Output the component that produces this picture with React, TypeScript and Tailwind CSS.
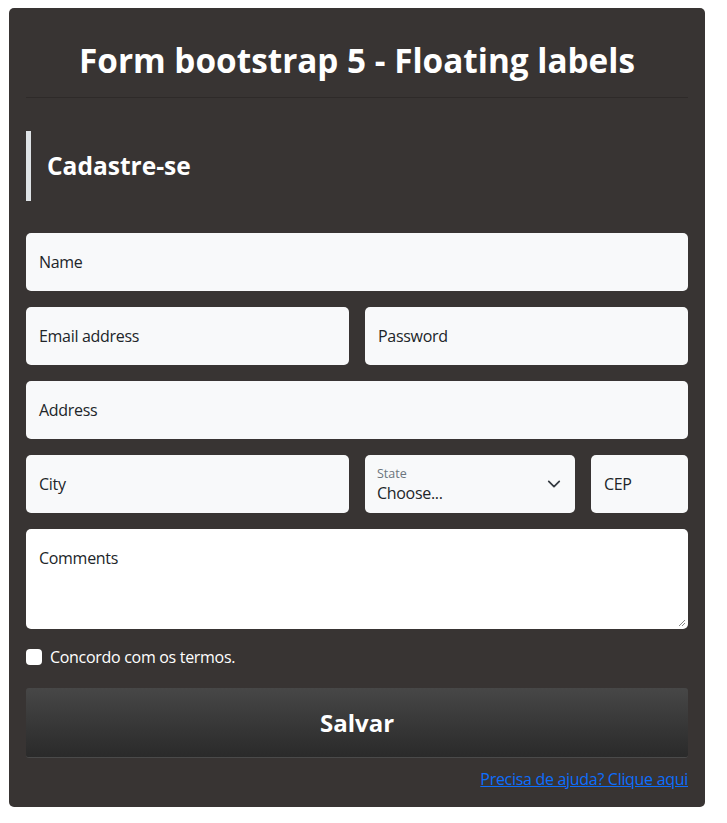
import React from 'react';

const font = { fontFamily: '"Open Sans", "Noto Sans", sans-serif' };

const Field: React.FC<{ label: string; className?: string }> = ({ label, className }) => (
  <div className={`h-[58px] rounded-[5px] bg-[#f8f9fa] flex items-center px-[13px] text-[16px] tracking-[-0.3px] text-[#212529] ${className || ''}`}>
    {label}
  </div>
);

const App: React.FC = () => {
  return (
    <div className="min-h-screen bg-white pt-[8px] px-[9px]" style={font}>
      <div className="w-[696px] h-[799px] bg-[#383433] rounded-[5px] px-[17px]">
        {/* Header */}
        <div className="h-[90px] border-b border-[#2e2a29] flex items-center justify-center">
          <h1 className="text-[33.3px] font-bold text-white mt-[25px] mb-[8px]">Form bootstrap 5 - Floating labels</h1>
        </div>

        {/* Section title */}
        <div className="mt-[33px] h-[70px] border-l-[5px] border-[#dee2e6] flex items-center pl-[16px]">
          <h2 className="text-[24.5px] font-bold text-white">Cadastre-se</h2>
        </div>

        <div className="mt-[32px] grid grid-cols-12 gap-[16px]">
          <Field label="Name" className="col-span-12" />
          <Field label="Email address" className="col-span-6" />
          <Field label="Password" className="col-span-6" />
          <Field label="Address" className="col-span-12" />
          <Field label="City" className="col-span-6" />
          <div className="col-span-4 h-[58px] rounded-[5px] bg-[#f8f9fa] flex items-center justify-between pl-[12px] pr-[14px]">
            <div className="flex flex-col pt-[1px]">
              <span className="text-[12.5px] leading-[16px] text-[#6c757d]">State</span>
              <span className="text-[16px] leading-[22px] tracking-[-0.3px] text-[#212529]">Choose...</span>
            </div>
            <svg width="14" height="14" viewBox="0 0 16 16" fill="none" stroke="#343a40" strokeWidth="2" strokeLinecap="round" strokeLinejoin="round">
              <path d="M2 5l6 6 6-6" />
            </svg>
          </div>
          <Field label="CEP" className="col-span-2" />
          <div className="col-span-12 h-[100px] rounded-[5px] bg-white relative px-[13px] pt-[17px] text-[16px] tracking-[-0.3px] text-[#212529]">
            Comments
            <svg className="absolute right-[2px] bottom-[2px]" width="8" height="8" viewBox="0 0 8 8" stroke="#888" strokeWidth="1">
              <path d="M1 7L7 1M4 7L7 4" />
            </svg>
          </div>
        </div>

        <div className="mt-[16px] flex items-center gap-[8px]">
          <span className="w-[16px] h-[16px] rounded-[4px] bg-white"></span>
          <span className="text-[16px] tracking-[-0.3px] text-white">Concordo com os termos.</span>
        </div>

        <button className="mt-[19px] w-full h-[70px] rounded-[3px] border-b border-[#4a4a4a] bg-gradient-to-b from-[#474747] to-[#2a2a2a] text-white text-[24px] font-bold">
          Salvar
        </button>

        <div className="mt-[9px] flex justify-end">
          <a href="#" className="text-[16px] tracking-[-0.3px] text-[#0d6efd] underline">Precisa de ajuda? Clique aqui</a>
        </div>
      </div>
    </div>
  );
};

export default App;
